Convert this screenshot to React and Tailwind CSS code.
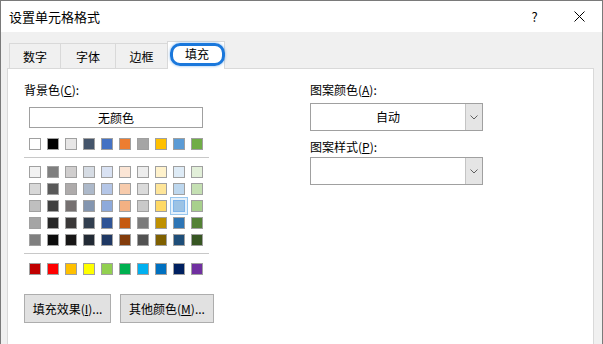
import React from 'react';

const theme = [
  '#FFFFFF', '#000000', '#E7E6E6', '#44546A', '#4472C4', '#ED7D31', '#A5A5A5', '#FFC000', '#5B9BD5', '#70AD47',
];

const shades = [
  ['#F2F2F2', '#7F7F7F', '#D0CECE', '#D6DCE4', '#D9E2F3', '#FBE5D5', '#EDEDED', '#FFF2CC', '#DEEBF6', '#E2EFD9'],
  ['#D8D8D8', '#595959', '#AEABAB', '#ADB9CA', '#B4C6E7', '#F7CBAC', '#DBDBDB', '#FEE599', '#BDD7EE', '#C5E0B3'],
  ['#BFBFBF', '#3F3F3F', '#757070', '#8496B0', '#8EAADB', '#F4B183', '#C9C9C9', '#FFD965', '#9CC3E5', '#A8D08D'],
  ['#A5A5A5', '#262626', '#3A3838', '#323F4F', '#2F5496', '#C55A11', '#7B7B7B', '#BF9000', '#2E75B5', '#538135'],
  ['#7F7F7F', '#0C0C0C', '#171616', '#222A35', '#1F3864', '#833C0B', '#525252', '#7F6000', '#1E4E79', '#375623'],
];

const standard = [
  '#C00000', '#FF0000', '#FFC000', '#FFFF00', '#92D050', '#00B050', '#00B0F0', '#0070C0', '#002060', '#7030A0',
];

function Swatch({ color, selected }) {
  return (
    <div className="relative w-[12px] h-[12px]">
      {selected && <div className="absolute -inset-[3px] border border-[#99c7ee] bg-[#e5f1fb]" />}
      <div
        className={`relative w-[12px] h-[12px] border ${selected ? 'border-[#7eb4ea]' : 'border-[#a0a0a0]'}`}
        style={{ backgroundColor: color }}
      />
    </div>
  );
}

function Chevron() {
  return (
    <svg width="8" height="5" viewBox="0 0 8 5" fill="none">
      <path d="M0.5 0.5 L4 4 L7.5 0.5" stroke="#606060" strokeWidth="1" />
    </svg>
  );
}

function Select({ value }) {
  return (
    <div className="flex h-[28px] w-[173px] border border-[#a0a0a0] bg-white">
      <div className="flex-1 flex items-center justify-center text-[12px]">{value}</div>
      <div className="w-[17px] flex items-center justify-center bg-[#e5e5e5] border-l border-[#c4c4c4]">
        <Chevron />
      </div>
    </div>
  );
}

export default function App() {
  return (
    <div className="w-[603px] h-[344px] overflow-hidden flex flex-col bg-[#f0f0f0] border-x border-t border-[#7a7a7a] text-black font-['Noto_Sans_CJK_SC','Noto_Sans',sans-serif]">
      {/* title bar */}
      <div className="h-[31px] shrink-0 bg-white flex items-center">
        <span className="pl-[8px] text-[13px]">设置单元格格式</span>
        <div className="ml-auto flex">
          <div className="w-[46px] h-[31px] flex items-center justify-center text-[13px] pl-[3px]">?</div>
          <div className="w-[46px] h-[31px] flex items-center justify-center">
            <svg width="11" height="11" viewBox="0 0 11 11">
              <path d="M0.5 0.5 L10.5 10.5 M10.5 0.5 L0.5 10.5" stroke="#000" strokeWidth="1" />
            </svg>
          </div>
        </div>
      </div>

      {/* tabs */}
      <div className="pt-[9px] pl-[8px] flex items-end shrink-0">
        <div className="w-[51px] h-[25px] border-l border-t border-[#d9d9d9] flex items-center justify-center pt-[2px] text-[12px]">数字</div>
        <div className="w-[55px] h-[25px] border-l border-t border-[#d9d9d9] flex items-center justify-center pt-[2px] text-[12px]">字体</div>
        <div className="w-[52px] h-[25px] border-l border-t border-[#d9d9d9] flex items-center justify-center pt-[2px] text-[12px]">边框</div>
        <div className="relative z-10 -mb-px w-[58px] h-[28px] bg-white border-x border-t border-[#d9d9d9] flex items-center justify-center pb-[4px] pl-[2px] text-[12px]">
          填充
          <div className="absolute left-[2px] top-[1px] w-[55px] h-[23px] rounded-[10px] border-[3px] border-[#1a78dc] shadow-[0_0_3px_rgba(26,120,220,0.55)]" />
        </div>
      </div>

      {/* panel */}
      <div className="ml-[6px] w-[587px] h-[300px] shrink-0 bg-white border border-[#d9d9d9] flex pl-[16px] pt-[13px] text-[12px]">
        <div className="w-[185px] flex flex-col">
          <div className="h-[16px] leading-[16px]">背景色(<u>C</u>):</div>
          <div className="mt-[9px] ml-[5px] w-[174px] h-[21px] border border-[#a0a0a0] bg-white flex items-center justify-center">无颜色</div>
          <div className="mt-[10px] ml-[5px] flex gap-[6px]">
            {theme.map((c, i) => <Swatch key={i} color={c} />)}
          </div>
          <div className="mt-[7px] h-px bg-[#c8c8c8]" />
          <div className="mt-[8px] ml-[5px] flex flex-col gap-[5px]">
            {shades.map((row, r) => (
              <div key={r} className="flex gap-[6px]">
                {row.map((c, i) => <Swatch key={i} color={c} selected={r === 2 && i === 8} />)}
              </div>
            ))}
          </div>
          <div className="mt-[7px] h-px bg-[#c8c8c8]" />
          <div className="mt-[9px] ml-[5px] flex gap-[6px]">
            {standard.map((c, i) => <Swatch key={i} color={c} />)}
          </div>
          <div className="mt-[19px] flex gap-[9px]">
            <div className="w-[87px] h-[29px] shrink-0 bg-[#e1e1e1] border border-[#adadad] flex items-center justify-center">填充效果(<u>I</u>)...</div>
            <div className="w-[94px] h-[29px] shrink-0 bg-[#e1e1e1] border border-[#adadad] flex items-center justify-center">其他颜色(<u>M</u>)...</div>
          </div>
        </div>

        <div className="ml-[101px] w-[173px] flex flex-col">
          <div className="h-[16px] leading-[16px]">图案颜色(<u>A</u>):</div>
          <div className="mt-[5px]"><Select value="自动" /></div>
          <div className="mt-[8px] h-[16px] leading-[16px]">图案样式(<u>P</u>):</div>
          <div className="mt-[2px]"><Select value="" /></div>
        </div>
      </div>
    </div>
  );
}
